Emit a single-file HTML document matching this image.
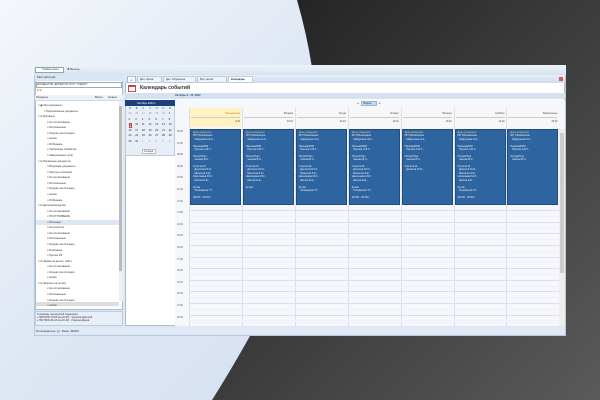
<!DOCTYPE html>
<html><head><meta charset="utf-8"><style>
*{margin:0;padding:0;box-sizing:border-box}
body{width:600px;height:400px;overflow:hidden;position:relative;font-family:"Liberation Sans",sans-serif;background:linear-gradient(135deg,#f4f7fb 0%,#dde6f3 40%,#cfdcf0 100%)}
.a{position:absolute}
.t{font-size:3px;color:#333;white-space:nowrap;line-height:3.2px}
.ev{position:absolute;top:129px;height:76px;background:#2e65a0;border:1px solid #1f4d80}
.ev div{font-size:2.6px;color:#e8eef6;line-height:3.4px;padding-left:2px;white-space:nowrap}
.ev .h{color:#e0c070}
</style></head><body>
<svg class="a" style="left:0;top:0" width="600" height="400"><path d="M297 0 Q340 150 290 260 Q250 340 212 400 L600 400 L600 0Z" fill="url(#g)"/><defs><linearGradient id="g" x1="0" y1="0" x2="1" y2="1"><stop offset="0" stop-color="#1e1e1e"/><stop offset="1" stop-color="#5a5a5a"/></linearGradient></defs></svg>
<div class="a" style="left:34px;top:65px;width:532px;height:271px;background:#dfe8f5;border:1px solid #b7c8de"></div>
<div class="a" style="left:34px;top:65px;width:532px;height:10px;background:linear-gradient(#eef3fa,#d8e3f1)"></div>
<div class="a" style="left:35px;top:67px;width:29px;height:6px;background:#fff;border:1px solid #8aa"></div>
<div class="a t" style="left:42px;top:68px;font-size:2.5px">Главное меню</div>
<div class="a t" style="left:67px;top:68px">✚ Выход</div>
<!-- left panel -->
<div class="a" style="left:35px;top:75px;width:88px;height:235px;background:#fff;border:1px solid #a9bdd6"></div>
<div class="a" style="left:35px;top:75px;width:88px;height:6px;background:#dbe6f4"></div>
<div class="a t" style="left:37px;top:76px">Мой рабочий</div>
<div class="a" style="left:36px;top:82px;width:86px;height:6px;border:1px solid #9ab"></div>
<div class="a t" style="left:37px;top:83px;font-size:2.6px">ШТУДЕНТОВ, ДИРЕКТОР ООО "ГУДЗИЛ"</div>
<div class="a t" style="left:37px;top:89px;color:#c90">■ ■ ⁞</div>
<div class="a" style="left:35px;top:95px;width:88px;height:6px;background:#eef2f8;border-bottom:1px solid #cdd"></div>
<div class="a t" style="left:36px;top:96px">Разделы</div><div class="a t" style="left:95px;top:96px">Всего</div><div class="a t" style="left:108px;top:96px">Новых</div>
<div class="a" style="left:36px;top:220px;width:83px;height:5px;background:#dde7f3"></div>
<div class="a" style="left:119px;top:101px;width:4px;height:200px;background:#eee"></div>
<div class="a" style="left:119px;top:106px;width:3px;height:165px;background:#bbb"></div>
<div class="a" style="left:36px;top:302px;width:83px;height:4px;background:#ddd"></div>
<div class="a" id="tree" style="left:36px;top:104px"></div>
<div class="a" style="left:35px;top:311px;width:88px;height:15px;background:#e9eff8;border:1px solid #bcd"></div>
<div class="a t" style="left:37px;top:313px;font-size:2.5px">Телефоны технической поддержки:<br>+7(987)250-78-95 (вн.22-92) - Черепов Дмитрий<br>+7(917)900-36-44 (вн.22-40) - Пинзина Диана</div>
<div class="a t" style="left:36px;top:330px">Пользователь: дт&nbsp; База: ЭКИМ</div>
<!-- right -->
<div class="a" style="left:125px;top:75px;width:440px;height:251px;background:#fff;border:1px solid #a9bdd6"></div>
<div class="a" style="left:125px;top:75px;width:440px;height:8px;background:linear-gradient(#e6eef8,#cfdcee)"></div>
<div class="a" style="left:127px;top:76px;width:9px;height:7px;background:#fff;border:1px solid #abc;color:#2a5fa8;font-size:5px;text-align:center;line-height:6px">⌂</div>
<div class="a" style="left:137px;top:76px;width:25px;height:7px;background:#eef3f9;border:1px solid #bcd"></div><div class="a t" style="left:140px;top:78px;font-size:2.6px">Дел. Архив</div>
<div class="a" style="left:163px;top:76px;width:33px;height:7px;background:#eef3f9;border:1px solid #bcd"></div><div class="a t" style="left:166px;top:78px;font-size:2.6px">Дел. Избранное</div>
<div class="a" style="left:197px;top:76px;width:30px;height:7px;background:#eef3f9;border:1px solid #bcd"></div><div class="a t" style="left:200px;top:78px;font-size:2.6px">Вхр. Архив</div>
<div class="a" style="left:228px;top:76px;width:25px;height:7px;background:#fff;border:1px solid #bcd"></div><div class="a t" style="left:231px;top:78px;font-size:2.6px;font-weight:bold">Календарь</div>
<div class="a" style="left:559px;top:77px;width:4px;height:4px;background:#d55"></div>
<div class="a" style="left:128px;top:85px;width:8px;height:7px;border:1px solid #c44;border-top-width:2px"></div>
<div class="a t" style="left:140px;top:86px;font-size:5px;line-height:5px;font-weight:bold;color:#333">Календарь событий</div>
<div class="a" style="left:125px;top:93px;width:440px;height:6px;background:#d5e1f1"></div>
<div class="a t" style="left:175px;top:94px;color:#1f4d80;font-weight:bold;font-size:2.6px">Октябрь 9 - 15, 2023</div>
<div class="a" style="left:125px;top:100px;width:50px;height:56px;background:#e8eef7;border:1px solid #bcd"></div>
<div class="a" style="left:125px;top:100px;width:50px;height:6px;background:#1d3f7a"></div>
<div class="a t" style="left:137px;top:101.5px;color:#fff;font-size:2.6px">Октябрь 2023 ▾</div>
<div class="a" id="mc" style="left:127px;top:107px"></div>
<div class="a" style="left:125px;top:102px;width:2px;height:0"></div>
<div class="a" style="left:142px;top:149px;width:14px;height:5px;background:#fff;border:1px solid #bbb"></div><div class="a t" style="left:144px;top:150px;font-size:2.4px">Сегодня</div>
<div class="a" style="left:175px;top:100px;width:390px;height:226px;background:#f5f7fa"></div>
<div class="a" style="left:361px;top:101px;width:16px;height:5px;background:#c8d8ee;border:1px solid #9bc"></div><div class="a t" style="left:363px;top:102px;font-size:2.4px">Неделя</div>
<div class="a t" style="left:357px;top:102px;color:#27c">◂</div><div class="a t" style="left:379px;top:102px;color:#27c">▸</div>
<div class="a" style="left:189px;top:108px;width:52px;height:19px;background:#fff3c4"></div>
<div class="a" style="left:241px;top:108px;width:318px;height:19px;background:#f7f7f7"></div>
<div class="a" id="grid" style="left:0;top:0"></div>
<div class="a" style="left:559px;top:129px;width:6px;height:197px;background:#eee"></div>
<div class="a" style="left:560px;top:133px;width:4px;height:140px;background:#ccc"></div>
<script>
var tree=["▣ Мои документы","  Персональные документы","⊟ Договоры","   На согласовании","   Исполненные","   Журнал регистрации","   Архив","   Избранное","   Требующие обработки","   Завершенные (оля)","⊟ Первичные документы","   Входящие документы","   Реестры платежей","   На согласовании","   Исполненные","   Журнал регистрации","   Архив","   Избранное","⊟ Делопроизводство","   На согласовании","   ПОСТУПИВШИЕ","   Исполнен","   На контроле","   На согласовании","   Исполненные","   Журнал регистрации","   Избранное","   Прочее РК","⊟ Заявки на выпол. работ","   На согласовании","   Журнал регистрации","   Архив","⊟ Запросы на оплату","   На согласовании","   Исполненные","   Журнал регистрации","   Архив"];
var h="";tree.forEach(function(s,i){var ind=s.match(/^ */)[0].length;h+='<div class="a t" style="left:'+(ind*3+2)+'px;top:'+(i*5.56)+'px;font-size:2.6px"><span style="color:#d9a820">■</span> '+s.trim()+'</div>';});
document.getElementById('tree').innerHTML=h;
var m="",d=["П","В","С","Ч","П","С","В"],rows=[[25,26,27,28,29,30,1],[2,3,4,5,6,7,8],[9,10,11,12,13,14,15],[16,17,18,19,20,21,22],[23,24,25,26,27,28,29],[30,31,1,2,3,4,5]];
d.forEach(function(c,j){m+='<div class="a t" style="left:'+(j*6.7+2)+'px;top:0;font-size:2.4px">'+c+'</div>'});
rows.forEach(function(r,i){r.forEach(function(c,j){var g=(i==0&&c>20)||(i==5&&c<10);m+='<div class="a t" style="left:'+(j*6.7+1.5)+'px;top:'+(i*5.6+5)+'px;font-size:2.6px;color:'+(g?'#999':'#222')+(i==2&&j==0?';border:1px solid #c44':'')+'">'+c+'</div>'})});
document.getElementById('mc').innerHTML=m;
var days=["Понедельник","Вторник","Среда","Четверг","Пятница","Суббота","Воскресенье"],g="";
for(var j=0;j<7;j++){var x=189+j*52.9;g+='<div class="a" style="left:'+x+'px;top:108px;width:1px;height:218px;background:#dde"></div>';g+='<div class="a t" style="left:'+(x+2)+'px;top:112px;width:49px;text-align:right;font-size:2.4px;color:'+(j?'#444':'#b80')+'">'+days[j]+'</div><div class="a t" style="left:'+(x+2)+'px;top:120px;width:49px;text-align:right;font-size:2.4px">'+(9+j)+'.10</div><div class="a" style="left:'+(x+2)+'px;top:117px;width:49px;height:1px;background:#ccc"></div>';}
for(var i=0;i<17;i++){var y=129+i*11.6;g+='<div class="a" style="left:189px;top:'+y+'px;width:370px;height:1px;background:#dde"></div><div class="a" style="left:189px;top:'+(y+5.8)+'px;width:370px;height:1px;background:#eef"></div><div class="a t" style="left:177px;top:'+(y+1)+'px;font-size:2.4px;color:#555">'+(('0'+(6+i)).slice(-2))+':00</div>';}
var ppl=["ИП Обновление","Хайрулина Э.А.;","","Пальма2000","Пролов А.В.Т.;","","ПотребТорг","Чекова В.С.;","","Строгов М.","Долисов Ю.И.;","Миносов З.Е.;","Николаева М.И.;","Шилов Е.Е.;","","Кутеж","Телефонов ТТ;","","(00:00 - 00:00 )"];
for(var j=0;j<7;j++){var x=190+j*52.9;g+='<div class="ev" style="left:'+x+'px;width:51px"><div class="h" style="padding-top:1px">День рождения</div>';var n=[19,16,18,19,11,21,8][j];for(var k=0;k<n;k++)g+='<div>'+(ppl[k]?(k%3==0?'':'&nbsp;&nbsp;')+ppl[k]:'&nbsp;')+'</div>';g+='</div>';}
document.getElementById('grid').innerHTML=g;
</script>
</body></html>
